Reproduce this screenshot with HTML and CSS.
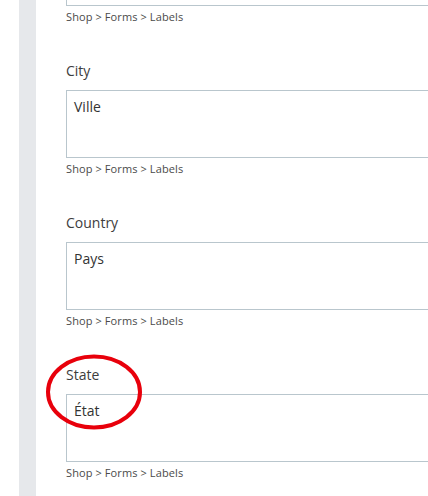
FILE: index.html
```html
<!DOCTYPE html>
<html lang="en">
<head>
<meta charset="utf-8">
<title>Labels</title>
<link rel="stylesheet" href="styles.css">
</head>
<body>
<div class="page">
  <div class="gutter"></div>
  <div class="rail"></div>
  <main class="main">
    <section class="field first">
      <div class="input cut"></div>
      <div class="crumb">Shop &gt; Forms &gt; Labels</div>
    </section>
    <section class="field">
      <label class="label">City</label>
      <div class="input">Ville</div>
      <div class="crumb">Shop &gt; Forms &gt; Labels</div>
    </section>
    <section class="field">
      <label class="label">Country</label>
      <div class="input">Pays</div>
      <div class="crumb">Shop &gt; Forms &gt; Labels</div>
    </section>
    <section class="field">
      <label class="label">State</label>
      <div class="input">État</div>
      <div class="crumb">Shop &gt; Forms &gt; Labels</div>
    </section>
  </main>
</div>
<svg class="annot" width="100" height="80" viewBox="0 0 100 80">
  <ellipse cx="48" cy="38" rx="46" ry="35.5" fill="none" stroke="#e8000b" stroke-width="4"/>
</svg>
</body>
</html>
```

FILE: styles.css
```css
html, body {
  margin: 0;
  padding: 0;
  background: #ffffff;
  overflow: hidden;
}
body {
  font-family: "Open Sans", "DejaVu Sans", sans-serif;
  color: #3a3a3a;
  position: relative;
  width: 428px;
  height: 496px;
}
.page {
  display: flex;
  height: 496px;
}
.gutter {
  width: 19px;
  flex: none;
}
.rail {
  width: 17px;
  flex: none;
  background: #e6e8eb;
}
.main {
  flex: 1;
  padding-left: 30px;
  overflow: hidden;
  display: flex;
  flex-direction: column;
  gap: 37px;
}
.field {
  display: flex;
  flex-direction: column;
  width: 420px;
}
.label {
  font-size: 14px;
  line-height: 19px;
  color: #3d3d3d;
  margin-bottom: 10px;
}
.input {
  box-sizing: border-box;
  height: 68px;
  border: 1px solid #b9c6cd;
  padding: 6px 7px;
  font-size: 14px;
  line-height: 19px;
  color: #333333;
}
.input.cut {
  height: 6px;
  border-top: none;
  padding: 0;
}
.crumb {
  margin-top: 3px;
  font-size: 11px;
  line-height: 15px;
  letter-spacing: 0.1px;
  color: #4a4a4a;
}
.annot {
  position: absolute;
  left: 46px;
  top: 354px;
  overflow: visible;
}
```
